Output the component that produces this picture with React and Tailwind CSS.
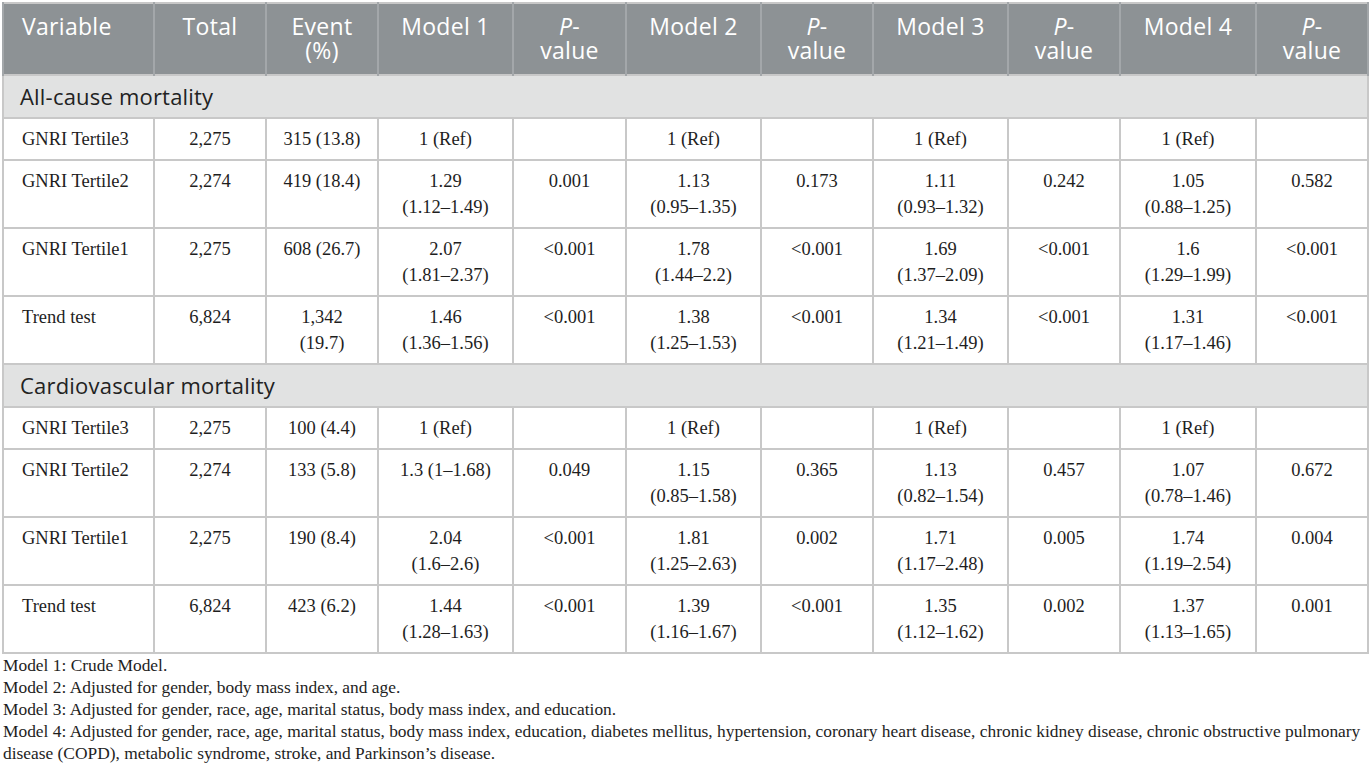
import React from 'react';

const cols = ['w-[151px]', 'w-[112px]', 'w-[112px]', 'w-[135px]', 'w-[113px]', 'w-[135px]', 'w-[112px]', 'w-[135px]', 'w-[112px]', 'w-[136px]', 'w-[112px]'];

// [variable, total, event, m1, p1, m2, p2, m3, p3, m4, p4]
const allCause = [
  ['GNRI Tertile3', '2,275', '315 (13.8)', '1 (Ref)', '', '1 (Ref)', '', '1 (Ref)', '', '1 (Ref)', ''],
  ['GNRI Tertile2', '2,274', '419 (18.4)', ['1.29', '(1.12–1.49)'], '0.001', ['1.13', '(0.95–1.35)'], '0.173', ['1.11', '(0.93–1.32)'], '0.242', ['1.05', '(0.88–1.25)'], '0.582'],
  ['GNRI Tertile1', '2,275', '608 (26.7)', ['2.07', '(1.81–2.37)'], '<0.001', ['1.78', '(1.44–2.2)'], '<0.001', ['1.69', '(1.37–2.09)'], '<0.001', ['1.6', '(1.29–1.99)'], '<0.001'],
  ['Trend test', '6,824', ['1,342', '(19.7)'], ['1.46', '(1.36–1.56)'], '<0.001', ['1.38', '(1.25–1.53)'], '<0.001', ['1.34', '(1.21–1.49)'], '<0.001', ['1.31', '(1.17–1.46)'], '<0.001'],
];

const cardio = [
  ['GNRI Tertile3', '2,275', '100 (4.4)', '1 (Ref)', '', '1 (Ref)', '', '1 (Ref)', '', '1 (Ref)', ''],
  ['GNRI Tertile2', '2,274', '133 (5.8)', '1.3 (1–1.68)', '0.049', ['1.15', '(0.85–1.58)'], '0.365', ['1.13', '(0.82–1.54)'], '0.457', ['1.07', '(0.78–1.46)'], '0.672'],
  ['GNRI Tertile1', '2,275', '190 (8.4)', ['2.04', '(1.6–2.6)'], '<0.001', ['1.81', '(1.25–2.63)'], '0.002', ['1.71', '(1.17–2.48)'], '0.005', ['1.74', '(1.19–2.54)'], '0.004'],
  ['Trend test', '6,824', '423 (6.2)', ['1.44', '(1.28–1.63)'], '<0.001', ['1.39', '(1.16–1.67)'], '<0.001', ['1.35', '(1.12–1.62)'], '0.002', ['1.37', '(1.13–1.65)'], '0.001'],
];

const sans = "font-['Open_Sans','Liberation_Sans',sans-serif]";
const serif = "font-['Liberation_Serif','DejaVu_Serif',serif]";

const Cell = ({ value, first }) => (
  <td className={`border-2 border-[#c8c8c8] align-top py-[7px] leading-[26px] ${first ? 'text-left pl-[18px]' : 'text-center'}`}>
    {Array.isArray(value) ? (
      <>
        {value[0]}
        <br />
        {value[1]}
      </>
    ) : (
      value
    )}
  </td>
);

const SectionRow = ({ title }) => (
  <tr className="bg-[#e1e2e2]">
    <td colSpan={11} className={`border-2 border-[#c8c8c8] ${sans} text-[22px] tracking-[0.2px] text-[#222] pl-[16px] pt-[7px] pb-[8px] leading-[26px]`}>
      {title}
    </td>
  </tr>
);

const PHead = () => (
  <>
    <i>P</i>-
    <br />
    value
  </>
);

export default function App() {
  const headers = ['Variable', 'Total', ['Event', '(%)'], 'Model 1', 'p', 'Model 2', 'p', 'Model 3', 'p', 'Model 4', 'p'];

  return (
    <div className="w-[1372px] h-[781px] bg-white pt-[2px] pl-[2px]">
      <table className="table-fixed border-collapse w-[1366px] border-2 border-[#c8c8c8]">
        <colgroup>
          {cols.map((c, i) => (
            <col key={i} className={c} />
          ))}
        </colgroup>
        <thead>
          <tr className="bg-[#8d9295]">
            {headers.map((h, i) => (
              <th
                key={i}
                className={`${sans} font-normal text-white text-[23px] tracking-[0.3px] leading-[24px] align-top pt-[10px] pb-[12px] border-x-2 border-x-[#a3a7aa] ${i === 0 ? 'text-left pl-[18px]' : 'text-center'}`}
              >
                {h === 'p' ? (
                  <PHead />
                ) : Array.isArray(h) ? (
                  <>
                    {h[0]}
                    <br />
                    {h[1]}
                  </>
                ) : (
                  h
                )}
              </th>
            ))}
          </tr>
        </thead>
        <tbody className={`${serif} text-[18.5px] text-[#1e1e1e]`}>
          <SectionRow title="All-cause mortality" />
          {allCause.map((row, r) => (
            <tr key={r}>
              {row.map((v, i) => (
                <Cell key={i} value={v} first={i === 0} />
              ))}
            </tr>
          ))}
          <SectionRow title="Cardiovascular mortality" />
          {cardio.map((row, r) => (
            <tr key={r}>
              {row.map((v, i) => (
                <Cell key={i} value={v} first={i === 0} />
              ))}
            </tr>
          ))}
        </tbody>
      </table>

      <div className={`${serif} text-[17.4px] text-[#1e1e1e] leading-[22px] pl-[1px] whitespace-nowrap`}>
        <p>Model 1: Crude Model.</p>
        <p>Model 2: Adjusted for gender, body mass index, and age.</p>
        <p>Model 3: Adjusted for gender, race, age, marital status, body mass index, and education.</p>
        <p>
          Model 4: Adjusted for gender, race, age, marital status, body mass index, education, diabetes mellitus, hypertension, coronary heart disease, chronic kidney disease, chronic obstructive pulmonary
          <br />
          disease (COPD), metabolic syndrome, stroke, and Parkinson’s disease.
        </p>
      </div>
    </div>
  );
}
